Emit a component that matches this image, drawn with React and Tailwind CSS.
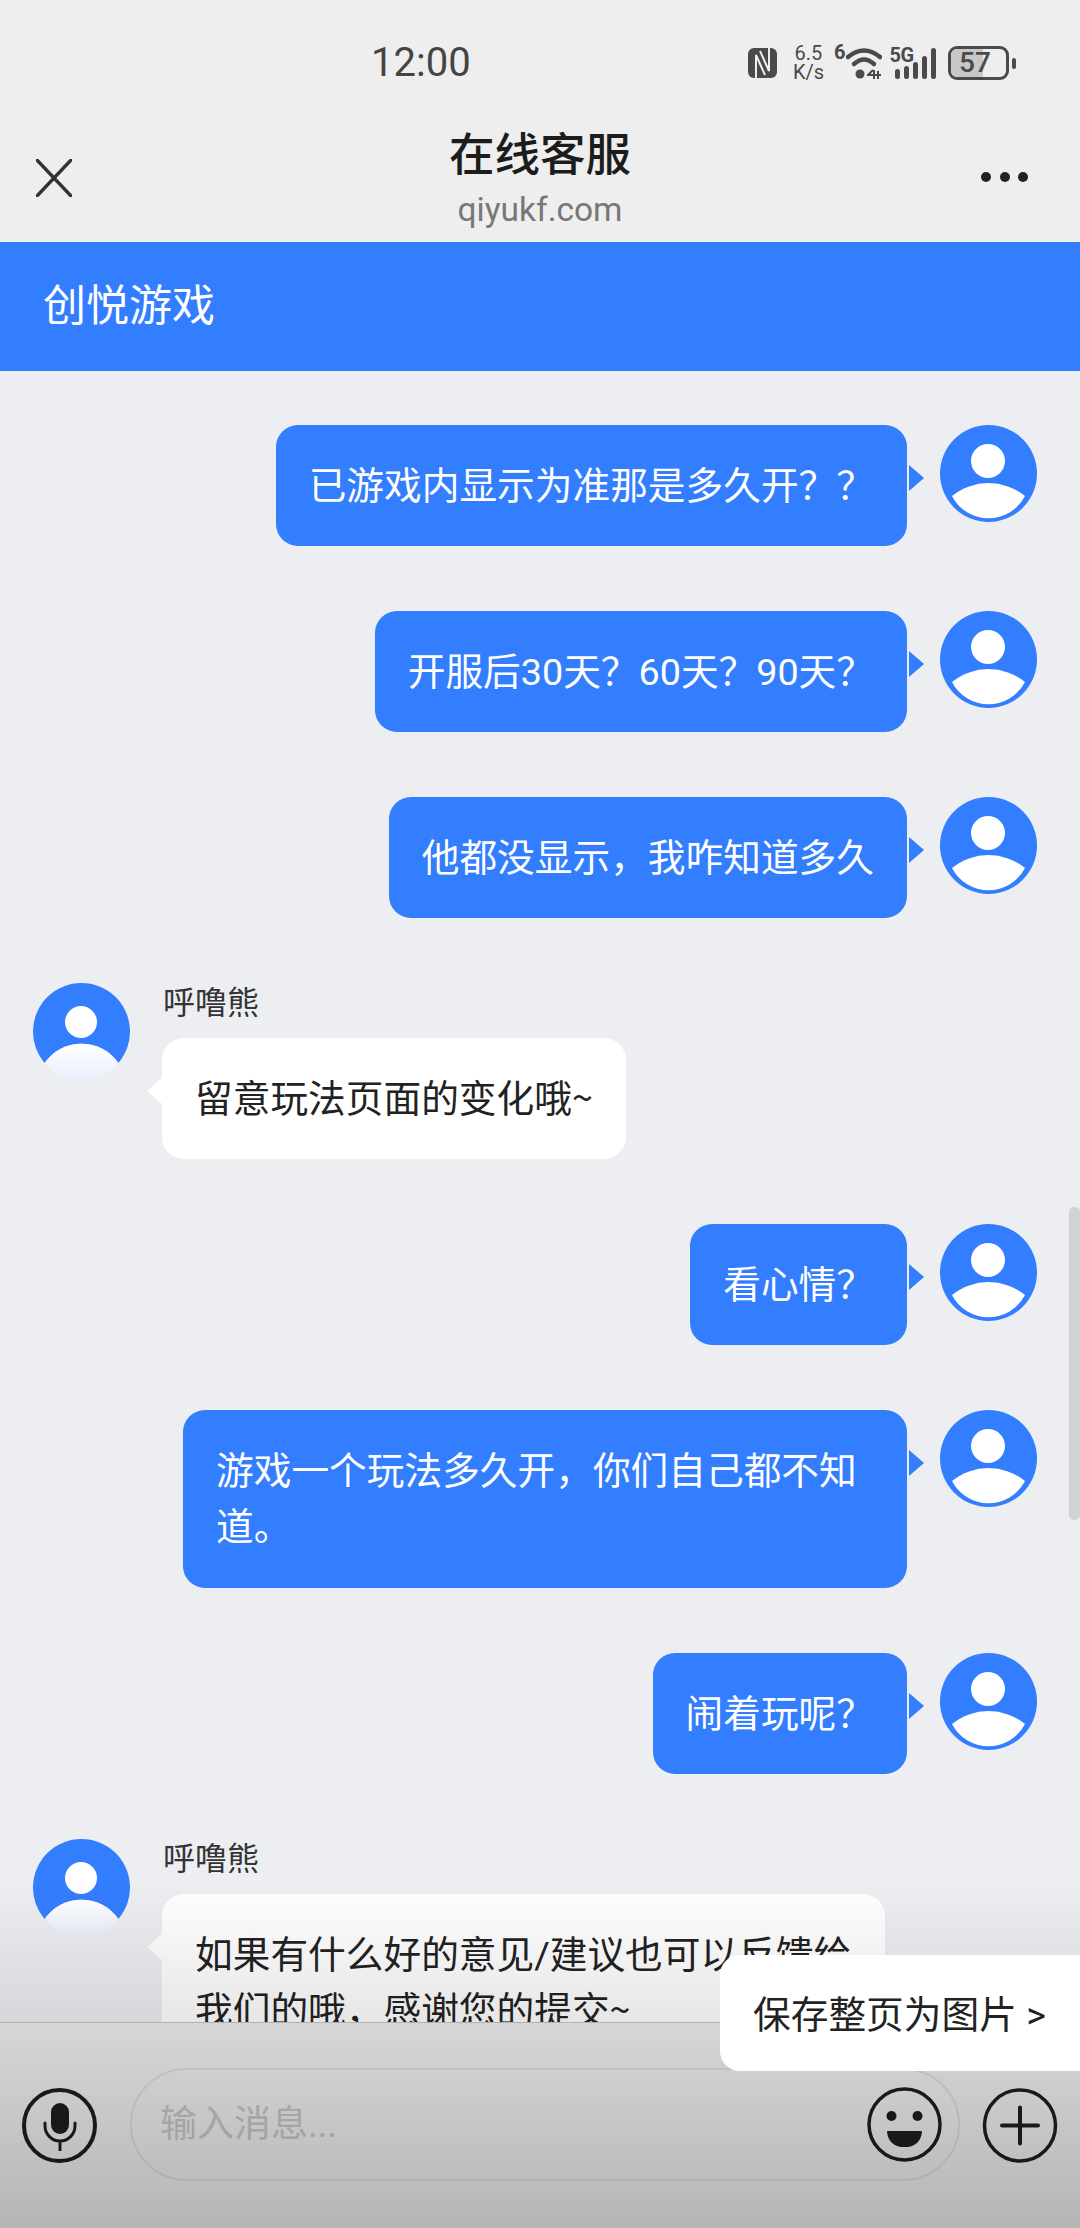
function UserAvatar() {
  return (
    <svg width="97" height="97" viewBox="0 0 97 97" className="shrink-0">
      <circle cx="48.5" cy="48.5" r="48.5" fill="#337dff" />
      <circle cx="48" cy="36" r="17" fill="#fff" />
      <path d="M12 71 A58 58 0 0 1 85 71 A41 41 0 0 1 12 71 Z" fill="#fff" />
    </svg>
  );
}

function AgentAvatar({ id }) {
  return (
    <svg width="97" height="97" viewBox="0 0 97 97" className="shrink-0">
      <defs>
        <linearGradient id={id} x1="0" y1="0" x2="0" y2="1">
          <stop offset="0" stopColor="#ffffff" />
          <stop offset="1" stopColor="#e9effd" />
        </linearGradient>
      </defs>
      <path d="M11.6 80 A48.5 48.5 0 1 1 85.4 80 A45 45 0 0 0 11.6 80 Z" fill="#337dff" />
      <circle cx="48" cy="39" r="16" fill="#fff" />
      <path d="M11.6 80 A45 45 0 0 1 85.4 80 A48.5 48.5 0 0 1 11.6 80 Z" fill={`url(#${id})`} />
    </svg>
  );
}

function MineRow({ children, width }) {
  return (
    <div className="flex justify-end pr-[43px]">
      <div className={`relative bg-[#337dff] text-white rounded-[22px] px-[33px] pt-[33px] pb-[32px] text-[37.7px] leading-[56px] ${width}`}>
        {children}
        <div className="absolute left-full ml-[2px] top-[40px] w-0 h-0 border-y-[13px] border-l-[15px] border-y-transparent border-l-[#337dff]" />
      </div>
      <div className="ml-[33px]">
        <UserAvatar />
      </div>
    </div>
  );
}

function AgentRow({ id, children, width }) {
  return (
    <div className="flex items-start pl-[33px]">
      <AgentAvatar id={id} />
      <div className="ml-[32px]">
        <div className="h-[55px] pl-[1px] text-[32px] leading-[40px] text-[#333]">呼噜熊</div>
        <div className={`relative bg-white text-[#222] rounded-[22px] px-[33px] pt-[33px] pb-[32px] text-[37.7px] leading-[56px] ${width}`}>
          {children}
          <div className="absolute right-full top-[40px] w-0 h-0 border-y-[13px] border-r-[15px] border-y-transparent border-r-white" />
        </div>
      </div>
    </div>
  );
}

function Tilde() {
  return <span className="leading-[0] font-['Noto_Sans_CJK_SC',sans-serif]">~</span>;
}

function StatusIcons() {
  return (
    <div className="flex items-center ml-[279px] text-[#4a4a4a]">
      <svg width="29" height="30" viewBox="0 0 29 30">
        <rect x="0" y="0" width="29" height="30" rx="6" fill="#4a4a4a" />
        <path d="M8 30V7L17 27M21 0V23L12 3" fill="none" stroke="#eee" strokeWidth="2" />
      </svg>
      <div className="ml-[16px] w-[31px] flex flex-col items-center text-[20px] leading-[19px]">
        <div>6.5</div>
        <div>K/s</div>
      </div>
      <div className="ml-[10px] self-start mt-[-1px] text-[20px] leading-[18px] font-bold">6</div>
      <svg width="36" height="32" viewBox="0 0 36 32" className="ml-[1px]">
        <path d="M2 10 Q18 -3 34 10" fill="none" stroke="#4a4a4a" strokeWidth="4.5" strokeLinecap="round" />
        <path d="M8 17 Q18 8 28 17" fill="none" stroke="#4a4a4a" strokeWidth="4.5" strokeLinecap="round" />
        <circle cx="14" cy="27" r="4.5" fill="#4a4a4a" />
        <path d="M21 28H35M27 23L22 28M28 23V32M32 24V32" stroke="#4a4a4a" strokeWidth="2" fill="none" />
      </svg>
      <div className="relative ml-[7px] w-[47px] h-[32px]">
        <div className="absolute left-0 top-[-1px] text-[20px] leading-[18px] font-bold tracking-[-0.5px]">5G</div>
        <svg width="47" height="32" viewBox="0 0 47 32">
          <rect x="6" y="22" width="5" height="10" rx="2.5" fill="#4a4a4a" />
          <rect x="15" y="19" width="5" height="13" rx="2.5" fill="#4a4a4a" />
          <rect x="24" y="15" width="5" height="17" rx="2.5" fill="#4a4a4a" />
          <rect x="33" y="9" width="5" height="23" rx="2.5" fill="#4a4a4a" />
          <rect x="42" y="1" width="5" height="31" rx="2.5" fill="#4a4a4a" />
        </svg>
      </div>
      <div className="relative ml-[12px] w-[61px] h-[34px] rounded-[9px] border-[3px] border-[#4a4a4a] overflow-hidden">
        <div className="absolute left-0 top-0 bottom-0 w-[57%] bg-[#c8c8c8]" />
        <div className="absolute inset-0 flex items-center justify-center text-[28px] font-medium leading-none pr-[8px]">57</div>
      </div>
      <div className="ml-[3px] w-[4px] h-[11px] rounded-[2px] bg-[#4a4a4a]" />
    </div>
  );
}

export default function App() {
  return (
    <div lang="zh-CN" className="relative w-[1080px] h-[2228px] flex flex-col overflow-hidden bg-[#eceef1] font-['Roboto','Noto_Sans_CJK_SC',sans-serif]">
      <div className="bg-[#eeeeee] h-[242px] shrink-0">
        <div className="flex items-center h-[126px] pl-[371px]">
          <div className="w-[98px] text-[40px] leading-none text-[#444]">12:00</div>
          <StatusIcons />
        </div>
        <div className="grid grid-cols-[1fr_auto_1fr] items-center h-[116px] px-[36px]">
          <svg width="36" height="38" viewBox="0 0 36 38" className="mb-[12px]">
            <path d="M1 1L35 37M35 1L1 37" stroke="#333" strokeWidth="3.4" strokeLinecap="round" />
          </svg>
          <div className="flex flex-col items-center mb-[2px]">
            <div className="text-[45.5px] leading-[54px] font-medium text-[#1c1c1c]">在线客服</div>
            <div className="text-[33.5px] leading-[54px] text-[#777]">qiyukf.com</div>
          </div>
          <div className="flex justify-between justify-self-end w-[47px] mr-[16px] mb-[14px]">
            <span className="w-[10px] h-[10px] rounded-full bg-[#222]" />
            <span className="w-[10px] h-[10px] rounded-full bg-[#222]" />
            <span className="w-[10px] h-[10px] rounded-full bg-[#222]" />
          </div>
        </div>
      </div>

      <div className="bg-[#337dff] h-[129px] shrink-0 flex items-center pl-[43px] text-white text-[43px]">创悦游戏</div>

      <div className="flex-1 min-h-0 overflow-hidden pt-[54px] flex flex-col gap-[65px]">
        <MineRow>已游戏内显示为准那是多久开？？</MineRow>
        <MineRow>开服后30天？60天？90天？</MineRow>
        <MineRow>他都没显示，我咋知道多久</MineRow>
        <AgentRow id="a1">留意玩法页面的变化哦<Tilde /></AgentRow>
        <MineRow>看心情？</MineRow>
        <MineRow width="max-w-[724px] min-h-[178px]">游戏一个玩法多久开，你们自己都不知道。</MineRow>
        <MineRow>闹着玩呢？</MineRow>
        <AgentRow id="a2" width="w-[723px]">如果有什么好的意见/建议也可以反馈给我们的哦，感谢您的提交<Tilde /></AgentRow>
      </div>

      <div className="h-[206px] shrink-0 bg-[#eeeeee] border-t border-[#c4c4c4] pt-[45px] flex items-start pl-[22px]">
        <div className="w-[75px] h-[75px] mt-[20px] rounded-full border-[4px] border-[#1e1e1e] flex items-center justify-center shrink-0">
          <svg width="36" height="50" viewBox="0 0 36 50">
            <rect x="9" y="2" width="18" height="31" rx="9" fill="#1e1e1e" />
            <path d="M3 22V25A15 15 0 0 0 33 25V22M18 40V49" fill="none" stroke="#1e1e1e" strokeWidth="3" strokeLinecap="round" />
          </svg>
        </div>
        <div className="ml-[33px] w-[830px] h-[113px] rounded-full border-[2px] border-[#dcdde0] flex items-center pl-[28px] pr-[16px] shrink-0">
          <input placeholder="输入消息..." className="flex-1 min-w-0 bg-transparent outline-none text-[37px] placeholder:text-[#c6c6c6]" />
          <svg width="75" height="75" viewBox="0 0 75 75" className="shrink-0">
            <circle cx="37.5" cy="37.5" r="35.5" fill="none" stroke="#1e1e1e" strokeWidth="3.5" />
            <circle cx="24.5" cy="29" r="5" fill="#1e1e1e" />
            <circle cx="50.5" cy="29" r="5" fill="#1e1e1e" />
            <path d="M21 45H54Q52 59 37.5 59Q23 59 21 45Z" fill="#1e1e1e" stroke="#1e1e1e" strokeWidth="2" strokeLinejoin="round" />
          </svg>
        </div>
        <svg width="76" height="75" viewBox="0 0 76 75" className="ml-[22px] mt-[20px] shrink-0">
          <circle cx="38" cy="37.5" r="35.5" fill="none" stroke="#1e1e1e" strokeWidth="3.5" />
          <path d="M20 37.5H56M38 19.5V55.5" stroke="#1e1e1e" strokeWidth="4" strokeLinecap="round" />
        </svg>
      </div>

      {/* bottom fade + scrollbar + save popup sit over the chat */}
      <div className="absolute left-0 right-0 bottom-0 h-[348px] pointer-events-none bg-gradient-to-b from-black/0 to-black/24" />
      <div className="absolute right-0 top-[1207px] w-[11px] h-[313px] rounded-[5px] bg-[#d2d3d5]" />
      <div className="absolute right-0 top-[1955px] w-[360px] h-[116px] bg-white rounded-l-[20px] flex items-center pl-[33px] pt-[4px] text-[37.7px] text-[#222]">
        保存整页为图片 &gt;
      </div>
    </div>
  );
}
